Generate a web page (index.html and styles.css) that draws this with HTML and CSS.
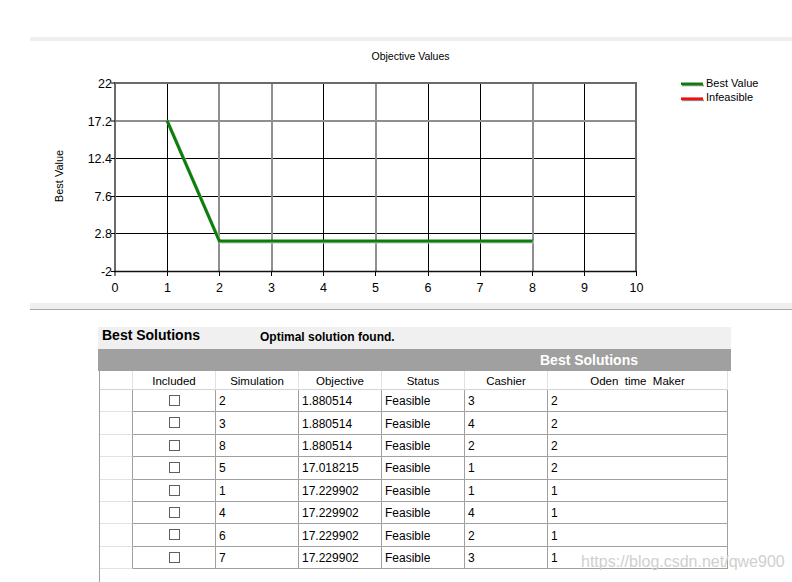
FILE: index.html
```html
<!DOCTYPE html>
<html>
<head>
<meta charset="utf-8">
<link rel="stylesheet" href="styles.css">
</head>
<body>
<div class="topband"></div>
<svg class="chart" width="792" height="262" viewBox="0 41 792 262">
  <text class="title" x="410.5" y="60" text-anchor="middle">Objective Values</text>
  <g stroke="#000" stroke-width="1">
    <line x1="167.5" y1="82" x2="167.5" y2="272"/>
    <line x1="323.5" y1="82" x2="323.5" y2="272"/>
    <line x1="428.5" y1="82" x2="428.5" y2="272"/>
    <line x1="480.5" y1="82" x2="480.5" y2="272"/>
    <line x1="584.5" y1="82" x2="584.5" y2="272"/>
    <line x1="115" y1="158.5" x2="637" y2="158.5"/>
    <line x1="115" y1="196.5" x2="637" y2="196.5"/>
    <line x1="115" y1="233.5" x2="637" y2="233.5"/>
  </g>
  <g stroke="#8f8f8f" stroke-width="2">
    <line x1="219" y1="82" x2="219" y2="272"/>
    <line x1="272" y1="82" x2="272" y2="272"/>
    <line x1="376" y1="82" x2="376" y2="272"/>
    <line x1="533" y1="82" x2="533" y2="272"/>
    <line x1="115" y1="121" x2="637" y2="121"/>
  </g>
  <g stroke="#6a6a6a" stroke-width="2">
    <line x1="636" y1="82" x2="636" y2="272"/>
    <line x1="115" y1="83" x2="637" y2="83"/>
    <line x1="115" y1="82" x2="115" y2="272"/>
  </g>
  <line x1="114" y1="271.5" x2="637" y2="271.5" stroke="#111" stroke-width="1.3"/>
  <g stroke="#000" stroke-width="1">
    <line x1="111" y1="83" x2="115" y2="83"/>
    <line x1="111" y1="121" x2="115" y2="121"/>
    <line x1="111" y1="158.5" x2="115" y2="158.5"/>
    <line x1="111" y1="196.5" x2="115" y2="196.5"/>
    <line x1="111" y1="233.5" x2="115" y2="233.5"/>
    <line x1="111" y1="271.5" x2="115" y2="271.5"/>
    <line x1="115" y1="272" x2="115" y2="276"/>
    <line x1="167.5" y1="272" x2="167.5" y2="276"/>
    <line x1="219.5" y1="272" x2="219.5" y2="276"/>
    <line x1="271.5" y1="272" x2="271.5" y2="276"/>
    <line x1="323.5" y1="272" x2="323.5" y2="276"/>
    <line x1="375.5" y1="272" x2="375.5" y2="276"/>
    <line x1="428.5" y1="272" x2="428.5" y2="276"/>
    <line x1="480.5" y1="272" x2="480.5" y2="276"/>
    <line x1="532.5" y1="272" x2="532.5" y2="276"/>
    <line x1="584.5" y1="272" x2="584.5" y2="276"/>
    <line x1="636.5" y1="272" x2="636.5" y2="276"/>
  </g>
  <g class="tick" text-anchor="end">
    <text x="112" y="87.5">22</text>
    <text x="112" y="125.5">17.2</text>
    <text x="112" y="163">12.4</text>
    <text x="112" y="200.5">7.6</text>
    <text x="112" y="238">2.8</text>
    <text x="112" y="276">-2</text>
  </g>
  <g class="tick" text-anchor="middle">
    <text x="115" y="291.5">0</text>
    <text x="167.5" y="291.5">1</text>
    <text x="219.5" y="291.5">2</text>
    <text x="271.5" y="291.5">3</text>
    <text x="323.5" y="291.5">4</text>
    <text x="375.5" y="291.5">5</text>
    <text x="428" y="291.5">6</text>
    <text x="480" y="291.5">7</text>
    <text x="532.5" y="291.5">8</text>
    <text x="584.5" y="291.5">9</text>
    <text x="636.5" y="291.5">10</text>
  </g>
  <text class="axis" transform="translate(63,176) rotate(-90)" text-anchor="middle">Best Value</text>
  <polyline points="168,121.6 220.3,242 533.7,242" fill="none" stroke="#c4c4c4" stroke-width="3"/>
  <polyline points="167,120.6 219.3,241 532.7,241" fill="none" stroke="#0a800a" stroke-width="3"/>
  <line x1="682" y1="85.5" x2="704" y2="85.5" stroke="#8a8a8a" stroke-width="1.5"/>
  <line x1="681" y1="83.8" x2="703" y2="83.8" stroke="#0a800a" stroke-width="2.6"/>
  <text class="legend" x="706" y="86.5">Best Value</text>
  <line x1="682" y1="100.4" x2="704" y2="100.4" stroke="#8a8a8a" stroke-width="1.5"/>
  <line x1="681" y1="98.7" x2="703" y2="98.7" stroke="#f01010" stroke-width="2.6"/>
  <text class="legend" x="706" y="101">Infeasible</text>
</svg>
<div class="sep"></div>
<section class="panel">
  <div class="panel-head">
    <span class="panel-title">Best Solutions</span>
    <span class="panel-status">Optimal solution found.</span>
  </div>
  <div class="bar"><span class="bar-title">Best Solutions</span></div>
  <div class="grid">
    <table class="solutions">
      <thead>
        <tr>
          <th class="rowhead c0"></th>
          <th class="c1">Included</th>
          <th class="c2">Simulation</th>
          <th class="c3">Objective</th>
          <th class="c4">Status</th>
          <th class="c5">Cashier</th>
          <th class="c6">Oden  time  Maker</th>
        </tr>
      </thead>
      <tbody>
        <tr><td class="rowhead"></td><td class="check"><span class="box"></span></td><td>2</td><td>1.880514</td><td>Feasible</td><td>3</td><td>2</td></tr>
        <tr><td class="rowhead"></td><td class="check"><span class="box"></span></td><td>3</td><td>1.880514</td><td>Feasible</td><td>4</td><td>2</td></tr>
        <tr><td class="rowhead"></td><td class="check"><span class="box"></span></td><td>8</td><td>1.880514</td><td>Feasible</td><td>2</td><td>2</td></tr>
        <tr><td class="rowhead"></td><td class="check"><span class="box"></span></td><td>5</td><td>17.018215</td><td>Feasible</td><td>1</td><td>2</td></tr>
        <tr><td class="rowhead"></td><td class="check"><span class="box"></span></td><td>1</td><td>17.229902</td><td>Feasible</td><td>1</td><td>1</td></tr>
        <tr><td class="rowhead"></td><td class="check"><span class="box"></span></td><td>4</td><td>17.229902</td><td>Feasible</td><td>4</td><td>1</td></tr>
        <tr><td class="rowhead"></td><td class="check"><span class="box"></span></td><td>6</td><td>17.229902</td><td>Feasible</td><td>2</td><td>1</td></tr>
        <tr><td class="rowhead"></td><td class="check"><span class="box"></span></td><td>7</td><td>17.229902</td><td>Feasible</td><td>3</td><td>1</td></tr>
      </tbody>
    </table>
  </div>
</section>
<div class="watermark">https://blog.csdn.net/qwe900</div>
</body>
</html>
```
FILE: styles.css
```css
html, body {
  margin: 0;
  padding: 0;
  background: #fff;
  width: 792px;
  height: 582px;
  overflow: hidden;
  font-family: "Liberation Sans", Arial, sans-serif;
  color: #000;
  position: relative;
}

.topband {
  margin-top: 37px;
  margin-left: 30px;
  height: 4px;
  background: #efefef;
}

.chart {
  display: block;
  font-family: "Liberation Sans", Arial, sans-serif;
}

.chart .title {
  font-size: 10.5px;
  fill: #000;
}

.chart .tick {
  font-size: 12.5px;
  fill: #000;
}

.chart .axis {
  font-size: 11px;
  fill: #000;
}

.chart .legend {
  font-size: 11px;
  fill: #000;
}

.sep {
  margin-left: 30px;
  height: 6px;
  background: #efefef;
  border-bottom: 1px solid #a8a8a8;
}

.panel {
  margin-top: 17px;
  margin-left: 98px;
  width: 633px;
}

.panel-head {
  height: 22px;
  background: #f0f0f0;
  display: flex;
  align-items: flex-start;
  padding-left: 4px;
  box-sizing: border-box;
}

.panel-title {
  width: 158px;
  font-size: 14px;
  line-height: 16px;
  font-weight: bold;
  padding-top: 0;
}

.panel-status {
  font-size: 12px;
  line-height: 14px;
  font-weight: bold;
  padding-top: 3px;
}

.bar {
  height: 22px;
  background: #a0a0a0;
  display: flex;
  align-items: center;
  padding-left: 442px;
}

.bar-title {
  color: #fff;
  font-size: 14px;
  font-weight: bold;
}

.grid {
  margin-left: 1px;
  border-left: 1px solid #a0a0a0;
  height: 220px;
}

.solutions {
  border-collapse: separate;
  border-spacing: 0;
  table-layout: fixed;
  width: 628px;
  font-size: 12px;
}

.solutions th,
.solutions td {
  box-sizing: border-box;
  padding: 0 0 0 3px;
  border-right: 1px solid #a0a0a0;
  border-bottom: 1px solid #a0a0a0;
  text-align: left;
  vertical-align: middle;
  white-space: pre;
  font-weight: normal;
}

.solutions th {
  height: 19px;
  text-align: center;
  padding: 1px 0 0;
  border-right-color: #e2e2e2;
  border-bottom-color: #d4d4d4;
  font-size: 11.5px;
}

.solutions td {
  height: 22.4px;
  padding-top: 1px;
}

.solutions .c0 { width: 33px; }
.solutions .c1 { width: 83px; }
.solutions .c2 { width: 83px; }
.solutions .c3 { width: 83px; }
.solutions .c4 { width: 83px; }
.solutions .c5 { width: 83px; }
.solutions .c6 { width: 180px; }

.solutions td.rowhead {
  border-bottom-color: #e2e2e2;
}

.solutions td.check {
  text-align: center;
  padding: 0;
}

.box {
  display: inline-block;
  width: 11px;
  height: 11px;
  box-sizing: border-box;
  border: 1px solid #5f5f5f;
  vertical-align: middle;
  position: relative;
  top: -1px;
}

.watermark {
  position: absolute;
  left: 581px;
  top: 553px;
  font-size: 16px;
  color: #cfcfcf;
  white-space: nowrap;
  font-family: "Liberation Sans", Arial, sans-serif;
}
```
